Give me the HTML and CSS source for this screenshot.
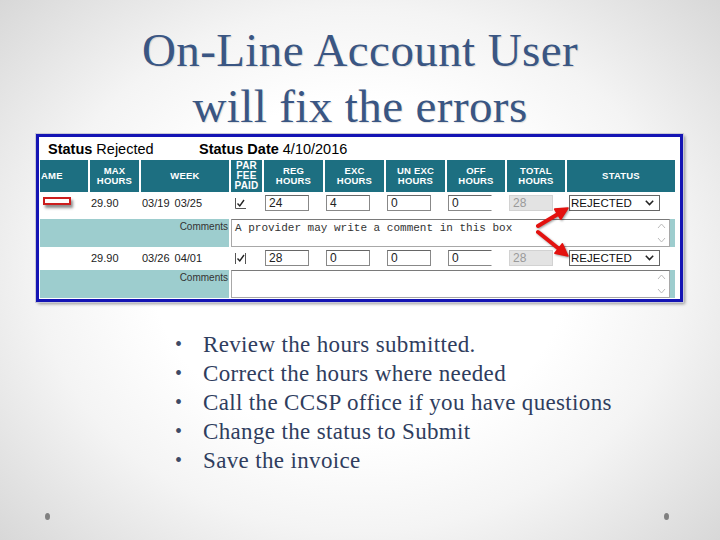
FILE: index.html
```html
<!DOCTYPE html>
<html>
<head>
<meta charset="utf-8">
<link rel="stylesheet" href="styles.css">
</head>
<body>
<div class="slide">
  <h1 class="title">On-Line Account User<br>will fix the errors</h1>

  <div class="shot">
    <div class="status-bar">
      <span class="sb-item sb-first"><b>Status</b> Rejected</span>
      <span class="sb-item"><b>Status Date</b> 4/10/2016</span>
    </div>
    <div class="grid">
      <div class="hd hd-left">AME</div>
      <div class="hd">MAX<br>HOURS</div>
      <div class="hd">WEEK</div>
      <div class="hd hd-tight">PAR<br>FEE<br>PAID</div>
      <div class="hd">REG<br>HOURS</div>
      <div class="hd">EXC<br>HOURS</div>
      <div class="hd">UN EXC<br>HOURS</div>
      <div class="hd">OFF<br>HOURS</div>
      <div class="hd">TOTAL<br>HOURS</div>
      <div class="hd">STATUS</div>

      <div class="cell"><div class="flag"></div></div>
      <div class="cell txt">29.90</div>
      <div class="cell txt"><span class="wk">03/19</span>03/25</div>
      <div class="cell chk-cell"><svg class="chk" width="11" height="11" viewBox="0 0 11 11"><path d="M0.5 0 V10.5 H11" fill="none" stroke="#555" stroke-width="1"/><path d="M2.5 5.5 L4.8 8 L9 2" fill="none" stroke="#222" stroke-width="1.4"/></svg></div>
      <div class="cell"><div class="inp">24</div></div>
      <div class="cell"><div class="inp">4</div></div>
      <div class="cell"><div class="inp">0</div></div>
      <div class="cell"><div class="inp inp-open">0</div></div>
      <div class="cell"><div class="inp inp-dis">28</div></div>
      <div class="cell"><div class="sel"><span>REJECTED</span><svg width="9" height="6" viewBox="0 0 9 6"><path d="M0.8 0.8 L4.5 4.6 L8.2 0.8" fill="none" stroke="#222" stroke-width="1.5"/></svg></div></div>

      <div class="cm-label">Comments</div>
      <div class="cm-cell">
        <div class="ta"><span class="ta-text">A provider may write a comment in this box</span>
          <svg class="ta-scroll" width="9" height="22" viewBox="0 0 9 22"><path d="M1 6 L4.5 2 L8 6" fill="none" stroke="#bbb" stroke-width="1"/><path d="M1 16 L4.5 20 L8 16" fill="none" stroke="#bbb" stroke-width="1"/></svg>
        </div>
      </div>

      <div class="cell"></div>
      <div class="cell txt">29.90</div>
      <div class="cell txt"><span class="wk">03/26</span>04/01</div>
      <div class="cell chk-cell"><svg class="chk" width="11" height="11" viewBox="0 0 11 11"><path d="M0.5 0 V11" fill="none" stroke="#555" stroke-width="1"/><path d="M2.5 5.5 L4.8 8 L9 2" fill="none" stroke="#222" stroke-width="1.4"/><path d="M10.5 0 V11" fill="none" stroke="#555" stroke-width="1"/></svg></div>
      <div class="cell"><div class="inp">28</div></div>
      <div class="cell"><div class="inp">0</div></div>
      <div class="cell"><div class="inp">0</div></div>
      <div class="cell"><div class="inp inp-open">0</div></div>
      <div class="cell"><div class="inp inp-dis">28</div></div>
      <div class="cell"><div class="sel"><span>REJECTED</span><svg width="9" height="6" viewBox="0 0 9 6"><path d="M0.8 0.8 L4.5 4.6 L8.2 0.8" fill="none" stroke="#222" stroke-width="1.5"/></svg></div></div>

      <div class="cm-label">Comments</div>
      <div class="cm-cell">
        <div class="ta"><span class="ta-text"></span>
          <svg class="ta-scroll" width="9" height="22" viewBox="0 0 9 22"><path d="M1 6 L4.5 2 L8 6" fill="none" stroke="#bbb" stroke-width="1"/><path d="M1 16 L4.5 20 L8 16" fill="none" stroke="#bbb" stroke-width="1"/></svg>
        </div>
      </div>
    </div>

    <svg class="arrows" width="641" height="162" viewBox="0 0 641 162">
      <g fill="#e3120f" stroke="#e3120f">
        <line x1="499" y1="89" x2="519" y2="77" stroke-width="4" stroke-linecap="round"/>
        <polygon points="529,71 521.8,82.3 515.6,72.1" stroke-width="1.5" stroke-linejoin="round"/>
        <line x1="499" y1="95" x2="519.5" y2="111.5" stroke-width="4" stroke-linecap="round"/>
        <polygon points="529,119 515.8,116.2 523.4,106.8" stroke-width="1.5" stroke-linejoin="round"/>
      </g>
    </svg>
  </div>

  <ul class="points">
    <li>Review the hours submitted.</li>
    <li>Correct the hours where needed</li>
    <li>Call the CCSP office if you have questions</li>
    <li>Change the status to Submit</li>
    <li>Save the invoice</li>
  </ul>

  <div class="footer">
    <span class="dot"></span>
    <span class="dot"></span>
  </div>
</div>
</body>
</html>
```

FILE: styles.css
```css
* { box-sizing: border-box; }

html, body {
  margin: 0;
  padding: 0;
}

body {
  width: 720px;
  height: 540px;
  overflow: hidden;
  background: radial-gradient(ellipse 72% 78% at 50% 50%, #ffffff 40%, #f4f4f4 62%, #d3d3d3 100%);
  font-family: "Liberation Sans", Arial, sans-serif;
}

.slide {
  display: flex;
  flex-direction: column;
  height: 540px;
}

.title {
  margin: 0;
  padding-top: 22px;
  height: 134px;
  font-family: "Liberation Serif", "Times New Roman", serif;
  font-weight: normal;
  font-size: 47px;
  line-height: 56px;
  letter-spacing: 0.4px;
  text-align: center;
  color: #3a5683;
  text-shadow: 1px 1px 1px rgba(0, 0, 0, 0.12);
}

.shot {
  position: relative;
  margin-left: 36px;
  width: 647px;
  height: 168px;
  border: 3px solid #1414b4;
  background: #fff;
  box-shadow: 0 0 0 1px #c9c9d6, 2px 2px 3px rgba(0, 0, 0, 0.4);
  padding-left: 1px;
}

.status-bar {
  display: flex;
  height: 23px;
  padding: 4px 0 0 8px;
  font-size: 14.5px;
  line-height: 17px;
  color: #000;
}

.sb-first { width: 151px; }

.grid {
  display: grid;
  grid-template-columns: 48px 49px 88px 31px 59px 59px 59px 58px 58px 108px;
  grid-template-rows: 32px 23px 28px 19px 28px;
  column-gap: 2px;
  row-gap: 2px;
  width: 635px;
}

.hd {
  background: #1d6f81;
  color: #fff;
  font-weight: bold;
  font-size: 9.5px;
  line-height: 10px;
  letter-spacing: 0.2px;
  text-align: center;
  display: flex;
  align-items: center;
  justify-content: center;
}

.hd-left {
  justify-content: flex-start;
  padding-left: 1px;
}

.hd-tight {
  font-size: 10px;
  line-height: 10.3px;
}

.cell {
  background: #fff;
  display: flex;
  align-items: flex-start;
  padding-top: 1px;
}

.txt {
  font-size: 11px;
  color: #222;
  padding-top: 3px;
  padding-left: 1px;
  line-height: 13px;
}

.wk { margin-right: 5px; }

.flag {
  width: 28px;
  height: 8px;
  margin: 2px 0 0 3px;
  background: #fff;
  border: 2px solid #cc1e1e;
  box-shadow: 2px 3px 3px rgba(0, 0, 0, 0.45);
}

.chk-cell {
  padding: 4px 0 0 4px;
}

.inp {
  width: 44px;
  height: 16px;
  border: 1px solid #888;
  border-top-color: #666;
  background: #fff;
  font-size: 12px;
  line-height: 14px;
  padding-left: 3px;
  color: #222;
  margin-left: 1px;
}

.inp-open { border-right-color: transparent; }

.inp-dis {
  margin-left: 2px;
  background: #e3e3e3;
  border-color: #d2d2d2;
  color: #9a9a9a;
}

.sel {
  width: 91px;
  height: 16px;
  margin-left: 2px;
  border: 1px solid #666;
  background: #fff;
  font-size: 11.5px;
  line-height: 14px;
  color: #111;
  padding: 0 5px 0 1px;
  display: flex;
  align-items: center;
  justify-content: space-between;
}

.cm-label {
  grid-column: 1 / 4;
  background: #9dcdce;
  font-size: 10px;
  color: #333;
  text-align: right;
  padding: 2px 1px 0 0;
  line-height: 12px;
}

.cm-cell {
  grid-column: 4 / 11;
  background: #9dcdce;
  padding-right: 5px;
}

.ta {
  height: 100%;
  background: #fff;
  border: 1px solid #a8a8a8;
  border-top-color: #7a7a7a;
  display: flex;
  justify-content: space-between;
  align-items: center;
  padding: 0 3px 0 3px;
}

.ta-text {
  align-self: flex-start;
  margin-top: 2px;
  font-family: "Liberation Mono", "Courier New", monospace;
  font-size: 11px;
  color: #333;
}

.arrows {
  position: absolute;
  left: 0;
  top: 0;
  pointer-events: none;
  filter: drop-shadow(1px 1px 1px rgba(0, 0, 0, 0.4));
}

.points {
  list-style: none;
  margin: 28px 0 0 0;
  padding: 0 0 0 175px;
  font-family: "Liberation Serif", "Times New Roman", serif;
  font-size: 23px;
  line-height: 29px;
  letter-spacing: 0.35px;
  color: #2f3d5e;
}

.points li {
  display: flex;
}

.points li::before {
  content: "\2022";
  width: 28px;
  flex: none;
  font-size: 20px;
  color: #3d4a66;
}

.footer {
  display: flex;
  justify-content: space-between;
  margin-top: 38px;
  padding: 0 51px 0 45px;
}

.dot {
  width: 5px;
  height: 7px;
  border-radius: 50%;
  background: #808080;
}
```
